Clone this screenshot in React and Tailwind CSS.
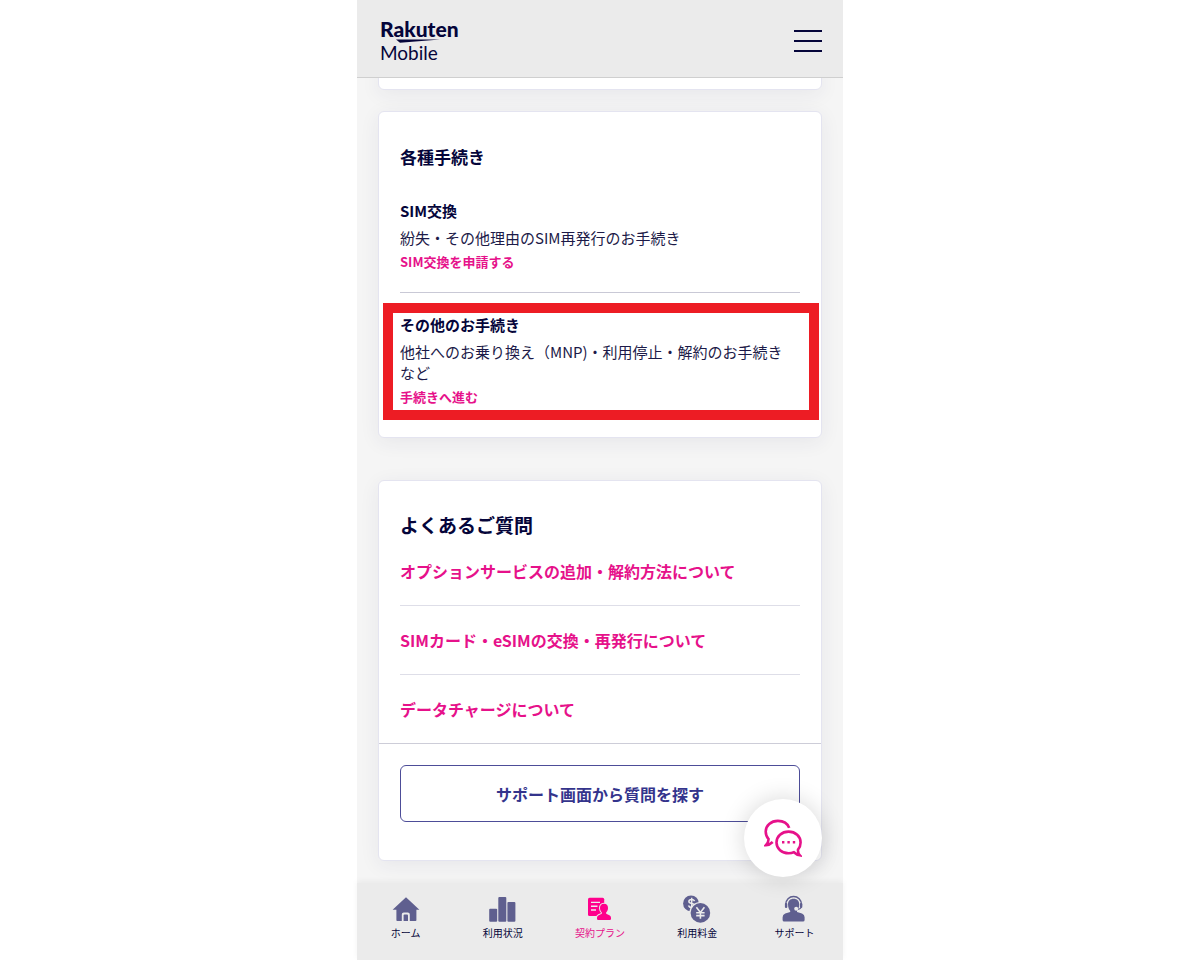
import React from "react";

const procedures = {
  sim: {
    title: "SIM交換",
    description: "紛失・その他理由のSIM再発行のお手続き",
    link: "SIM交換を申請する",
  },
  other: {
    title: "その他のお手続き",
    description: "他社へのお乗り換え（MNP)・利用停止・解約のお手続き\nなど",
    link: "手続きへ進む",
  },
};

const questions = [
  "オプションサービスの追加・解約方法について",
  "SIMカード・eSIMの交換・再発行について",
  "データチャージについて",
];

const tabs = [
  { label: "ホーム", icon: HomeIcon },
  { label: "利用状況", icon: UsageIcon },
  { label: "契約プラン", icon: PlanIcon, active: true },
  { label: "利用料金", icon: BillingIcon },
  { label: "サポート", icon: SupportIcon },
];

function HomeIcon() {
  return (
    <svg viewBox="0 0 28 28" className="size-7" fill="currentColor" aria-hidden="true">
      <path d="M14 2.3 27.4 14.8H24.4V25.2Q24.4 26 23.6 26H17.8V19.6Q17.8 17.6 15.8 17.6H11.8Q9.8 17.6 9.8 19.6V26H5.2Q4.4 26 4.4 25.2V14.8H.6Z" />
      <path d="M11.6 26V20.4Q11.6 19.5 12.5 19.5H15.1Q16 19.5 16 20.4V26Z" />
    </svg>
  );
}

function UsageIcon() {
  return (
    <svg viewBox="0 0 28 28" className="size-7" fill="currentColor" aria-hidden="true">
      <rect x="0.2" y="13.7" width="8" height="13" rx="1" />
      <rect x="9.3" y="2" width="8" height="24.7" rx="1" />
      <rect x="18.4" y="7" width="8" height="19.7" rx="1" />
    </svg>
  );
}

function PlanIcon() {
  return (
    <svg viewBox="0 0 28 28" className="size-7" aria-hidden="true">
      <rect x="2" y="2.7" width="16.2" height="18.3" rx="1.6" fill="currentColor" />
      <path d="M5 7.4H14M5 11.2H11.5M5 15H10" stroke="#ebebeb" strokeWidth="1.4" />
      <path
        d="M18 8.8C20.8 8.8 22.2 10.8 22 13.2C21.9 15.2 21 16.6 20.2 17.3V18.8L23.4 20.2Q25 21 25 22.8V23.8Q25 25 23.8 25H12.2Q11 25 11 23.8V22.8Q11 21 12.6 20.2L15.8 18.8V17.3C15 16.6 14.1 15.2 14 13.2C13.8 10.8 15.2 8.8 18 8.8Z"
        fill="currentColor"
        stroke="#ebebeb"
        strokeWidth="2"
        paintOrder="stroke"
      />
    </svg>
  );
}

function BillingIcon() {
  return (
    <svg viewBox="0 0 28 28" className="size-7" fill="none" aria-hidden="true">
      <circle cx="8" cy="8.4" r="7.9" fill="currentColor" />
      <path
        d="M11.6 6.1C11 4.9 10 4.4 8.7 4.4C7 4.4 5.9 5.2 5.9 6.4C5.9 9.2 11.7 7.6 11.7 10.4C11.7 11.7 10.4 12.5 8.7 12.5C7.1 12.5 5.9 11.8 5.5 10.5M8.7 2.7V14.2"
        stroke="#ebebeb"
        strokeWidth="1.5"
      />
      <circle cx="17.4" cy="17.9" r="11" fill="#ebebeb" />
      <circle cx="17.4" cy="17.9" r="9.8" fill="currentColor" />
      <path d="M13.4 12.2 17.4 17.4 21.4 12.2M17.4 17.4V23.8M13.2 17.8H21.6M13.2 20.6H21.6" stroke="#ebebeb" strokeWidth="1.6" />
    </svg>
  );
}

function SupportIcon() {
  return (
    <svg viewBox="0 0 28 28" className="size-7" fill="none" aria-hidden="true">
      <path d="M5.8 10.5V9.3C5.8 4.8 9.2 1.4 13.6 1.4S21.4 4.8 21.4 9.3V10.5" stroke="currentColor" strokeWidth="1.5" />
      <rect x="4.9" y="8" width="2.4" height="5" rx="1.1" fill="currentColor" />
      <rect x="19.9" y="8" width="2.4" height="5" rx="1.1" fill="currentColor" />
      <path
        d="M13.6 3.8C17 3.8 19.2 6 19.2 9.2C19.2 12.3 18.2 14.6 17 15.8V17L22 18.4Q24.6 19.3 24.6 22.2V25Q24.6 26.6 23 26.6H4.2Q2.6 26.6 2.6 25V22.2Q2.6 19.3 5.2 18.4L10.2 17V15.8C9 14.6 8 12.3 8 9.2C8 6 10.2 3.8 13.6 3.8Z"
        fill="currentColor"
      />
      <path d="M21 12.4C20.6 13.8 19.2 14.4 17 14.4" stroke="currentColor" strokeWidth="1.2" />
      <circle cx="16.2" cy="13.8" r="2" fill="#ebebeb" />
    </svg>
  );
}

function ChatIcon() {
  return (
    <svg
      viewBox="0 0 38 38"
      className="size-[38px]"
      fill="none"
      stroke="currentColor"
      strokeWidth="2.6"
      aria-hidden="true"
    >
      <path d="M25.2 8.9C23.6 4.6 19.1 1.9 13.9 1.9C7 1.9 1.7 6.6 1.7 12.6C1.7 15.6 2.7 18.2 4.6 20.1C4.6 22.4 3.6 24.4 1.9 26.1C4.6 26 6.9 24.8 8.7 23" />
      <path d="M35.9 36.3C34.2 34.5 33.8 32.6 34 30.6C35.7 28.6 36.6 26.2 36.6 23.5C36.6 17.3 31.4 12.6 24.6 12.6S12.5 17.3 12.5 23.5S17.8 34.3 24.6 34.3C26.6 34.3 28.3 34 29.9 33.2C31.6 34.8 33.5 35.9 35.9 36.3Z" />
      <path d="M18 23.2H20.4M23.4 23.2H25.8M28.8 23.2H31.2" />
    </svg>
  );
}

function Logo() {
  return (
    <a href="#top" aria-label="Rakuten Mobile" className="flex flex-col font-['Lato',sans-serif]">
      <span className="text-[21px] leading-5 font-black">Rakuten</span>
      <svg viewBox="0 0 78 4" className="h-1 w-[78px]" fill="currentColor" aria-hidden="true">
        <path d="M16 0.6H60L20 3.8Z" />
      </svg>
      <span className="text-[19px] leading-5">Mobile</span>
    </a>
  );
}

function Procedure({ title, description, link }) {
  return (
    <>
      <h3 className="text-[15px] leading-6 font-bold">{title}</h3>
      <p className="mt-1 text-[15px] leading-[21px] whitespace-pre-line text-[#1c1a48]">{description}</p>
      <a href="#procedure" className="mt-1 block text-[13px] leading-5 font-bold text-[#e6118a]">
        {link}
      </a>
    </>
  );
}

function Card({ className, children }) {
  return (
    <section
      className={`rounded-md border border-[#e4e4f0] bg-white shadow-[0_4px_20px_rgba(40,40,90,0.07)] ${className}`}
    >
      {children}
    </section>
  );
}

export default function App() {
  return (
    <div className="min-h-screen bg-white font-['Noto_Sans_CJK_JP',sans-serif] text-[#05053a]">
      <div className="relative mx-auto flex h-screen max-w-[486px] flex-col bg-[#f5f5f5]">
        <header className="z-10 flex shrink-0 items-center justify-between border-b border-[#cfcfcf] bg-[#ebebeb] pt-[19px] pr-[21px] pb-[14px] pl-[23px]">
          <Logo />
          <button type="button" aria-label="メニュー" className="flex flex-col gap-2">
            <span className="h-0.5 w-7 bg-current" />
            <span className="h-0.5 w-7 bg-current" />
            <span className="h-0.5 w-7 bg-current" />
          </button>
        </header>

        <main className="min-h-0 flex-1 overflow-hidden px-[21px]">
          <Card className="-mt-2 h-5">{null}</Card>

          <Card className="mt-[21px] px-[21px] pb-[17px]">
            <h2 className="pt-[31px] text-[17px] leading-7 font-bold">各種手続き</h2>
            <div className="mt-7 border-b border-[#c9c9d6] pb-5">
              <Procedure {...procedures.sim} />
            </div>
            <div className="mt-[10px] -mr-[19px] -ml-[17px] border-10 border-[#ed1c24] pr-[9px] pb-[3px] pl-[7px]">
              <Procedure {...procedures.other} />
            </div>
          </Card>

          <Card className="mt-[42px]">
            <div className="px-[21px] pt-7">
              <h2 className="text-[19px] leading-8 font-bold">よくあるご質問</h2>
              <ul className="divide-y divide-[#dedee8]">
                {questions.map((question) => (
                  <li key={question} className="flex h-[69px] items-center first:h-[65px] first:pb-1 last:h-[68px]">
                    <a href="#faq" className="text-base leading-6 font-bold text-[#e6118a]">
                      {question}
                    </a>
                  </li>
                ))}
              </ul>
            </div>
            <div className="border-t border-[#cdcdd8] px-[21px] pt-[21px] pb-[38px]">
              <button
                type="button"
                className="h-[57px] w-full rounded-md border border-[#4d4d98] text-base font-bold text-[#34348c]"
              >
                サポート画面から質問を探す
              </button>
            </div>
          </Card>
        </main>

        <button
          type="button"
          aria-label="チャット"
          className="absolute right-[21px] bottom-[83px] z-10 grid size-[78px] place-items-center rounded-full bg-white text-[#e6118a] shadow-[0_0_24px_rgba(0,0,0,0.16)]"
        >
          <ChatIcon />
        </button>

        <nav className="grid h-[77px] shrink-0 grid-cols-5 bg-[#ebebeb] pt-3 shadow-[0_-2px_6px_rgba(0,0,0,0.05)]">
          {tabs.map(({ label, icon: Icon, active }) => (
            <a
              key={label}
              href="#tab"
              aria-current={active ? "page" : undefined}
              className={`flex flex-col items-center text-[10px] leading-5 ${active ? "text-[#e6118a]" : ""}`}
            >
              <span className={active ? "text-[#ff008c]" : "text-[#5f5f8f]"}>
                <Icon />
              </span>
              {label}
            </a>
          ))}
        </nav>
      </div>
    </div>
  );
}
